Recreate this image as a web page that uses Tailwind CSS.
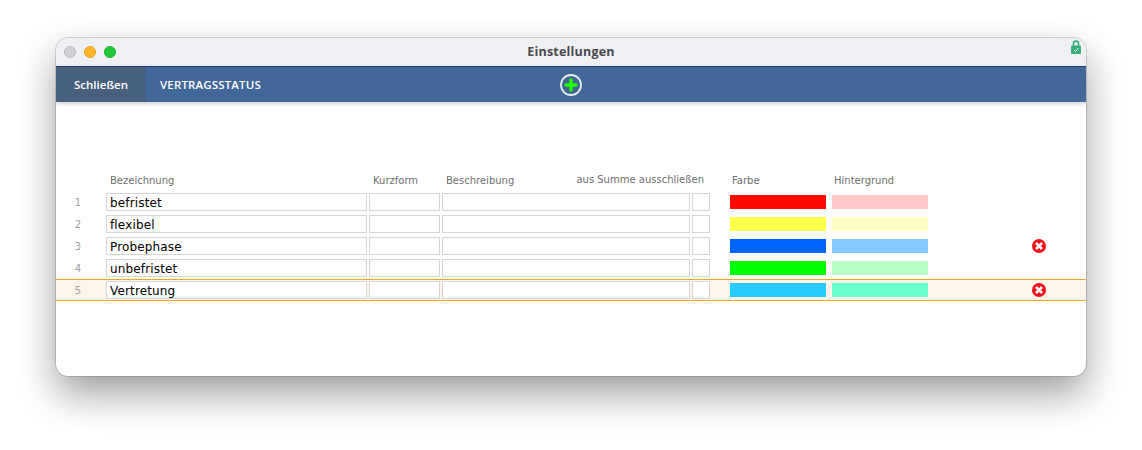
<!DOCTYPE html>
<html lang="de">
<head>
  <meta charset="UTF-8" />
  <title>Einstellungen</title>
  <script src="https://cdn.jsdelivr.net/npm/@tailwindcss/browser@4"></script>
</head>
<body class="bg-white w-[1142px] h-[450px] overflow-hidden font-['DejaVu_Sans',sans-serif]">
  <div class="ml-[56px] mt-[38px] w-[1030px] h-[338px] rounded-[12px] bg-white overflow-hidden outline outline-1 outline-black/15 shadow-[0_18px_38px_rgba(0,0,0,0.38)]">

    <!-- title bar -->
    <div class="h-[28px] bg-[#eff0f4] grid grid-cols-[1fr_auto_1fr] items-center px-[8px]">
      <div class="flex gap-[8px]">
        <span class="w-[12px] h-[12px] rounded-full bg-[#d1d1d6] border border-[#bbbbc0]"></span>
        <span class="w-[12px] h-[12px] rounded-full bg-[#fdb52b] border border-[#e8a320]"></span>
        <span class="w-[12px] h-[12px] rounded-full bg-[#1fc638] border border-[#1bb02f]"></span>
      </div>
      <div class="font-['Open_Sans',sans-serif] font-bold text-[12.5px] tracking-[0.2px] text-[#4a4a4e]">Einstellungen</div>
      <div class="flex justify-end -mr-[3px]">
        <svg class="w-[10px] h-[14px] -mt-[11px]" viewBox="0 0 10 14">
          <path d="M2.5 6V3.6a2.5 2.5 0 0 1 5 0V6" fill="none" stroke="#35b07a" stroke-width="1.6" />
          <rect x="0" y="5.5" width="10" height="8.5" rx="1" fill="#35b07a" />
          <path d="M3 10l1.6 1.6L7.2 8.2" fill="none" stroke="#fff" stroke-width="1" />
        </svg>
      </div>
    </div>

    <!-- nav -->
    <div class="relative z-10 h-[36px] border-t border-t-[#1d3a68] bg-[#426899] grid grid-cols-[1fr_auto_1fr] items-center shadow-[0_2px_4px_rgba(0,0,0,0.18)] font-['Open_Sans',sans-serif] text-[11.5px] font-semibold text-white">
      <div class="flex items-center h-full">
        <div class="w-[90px] h-full bg-[#48607f] flex items-center pl-[18px]">Schließen</div>
        <div class="pl-[14px] tracking-[0.15px] whitespace-nowrap">VERTRAGSSTATUS</div>
      </div>
      <svg class="w-[22px] h-[22px]" viewBox="0 0 22 22">
        <circle cx="11" cy="11" r="10" fill="#3f6490" stroke="#e6edf2" stroke-width="1.8" />
        <path d="M11 6v10M6 11h10" stroke="#22ff00" stroke-width="3.4" stroke-linecap="round" />
      </svg>
      <div></div>
    </div>

    <!-- table -->
    <div class="pt-[70px]">
      <div class="flex h-[19px] text-[10px] text-[#6f6f6f] leading-[17px]">
        <div class="w-[50px]"></div>
        <div class="w-[263px] pl-[4px]">Bezeichnung</div>
        <div class="w-[73px] pl-[4px]">Kurzform</div>
        <div class="w-[268px] pl-[4px] pr-[6px] flex justify-between">
          <span>Beschreibung</span>
          <span class="-mt-[1px]">aus Summe ausschließen</span>
        </div>
        <div class="w-[20px]"></div>
        <div class="w-[102px] pl-[2px]">Farbe</div>
        <div class="w-[96px] pl-[2px]">Hintergrund</div>
      </div>

      <div class="flex items-center h-[22px]">
        <div class="w-[44px] text-center text-[10px] text-[#a0a0a0]">1</div><div class="w-[6px]"></div>
        <div class="w-[261px] h-[18px] border border-[#d6d6d6] bg-white pl-[3px] text-[12px] tracking-[0.15px] leading-[18px] text-black">befristet</div>
        <div class="ml-[2px] w-[71px] h-[18px] border border-[#d6d6d6] bg-white"></div>
        <div class="ml-[2px] w-[248px] h-[18px] border border-[#d6d6d6] bg-white"></div>
        <div class="ml-[2px] w-[18px] h-[18px] border border-[#d6d6d6] bg-white"></div>
        <div class="ml-[20px] w-[96px] h-[14px] bg-[#ff0a00]"></div>
        <div class="ml-[6px] w-[96px] h-[14px] bg-[#ffc9c9]"></div>
      </div>
      <div class="flex items-center h-[22px]">
        <div class="w-[44px] text-center text-[10px] text-[#a0a0a0]">2</div><div class="w-[6px]"></div>
        <div class="w-[261px] h-[18px] border border-[#d6d6d6] bg-white pl-[3px] text-[12px] tracking-[0.15px] leading-[18px] text-black">flexibel</div>
        <div class="ml-[2px] w-[71px] h-[18px] border border-[#d6d6d6] bg-white"></div>
        <div class="ml-[2px] w-[248px] h-[18px] border border-[#d6d6d6] bg-white"></div>
        <div class="ml-[2px] w-[18px] h-[18px] border border-[#d6d6d6] bg-white"></div>
        <div class="ml-[20px] w-[96px] h-[14px] bg-[#ffff4d]"></div>
        <div class="ml-[6px] w-[96px] h-[14px] bg-[#ffffc8]"></div>
      </div>
      <div class="flex items-center h-[22px]">
        <div class="w-[44px] text-center text-[10px] text-[#a0a0a0]">3</div><div class="w-[6px]"></div>
        <div class="w-[261px] h-[18px] border border-[#d6d6d6] bg-white pl-[3px] text-[12px] tracking-[0.15px] leading-[18px] text-black">Probephase</div>
        <div class="ml-[2px] w-[71px] h-[18px] border border-[#d6d6d6] bg-white"></div>
        <div class="ml-[2px] w-[248px] h-[18px] border border-[#d6d6d6] bg-white"></div>
        <div class="ml-[2px] w-[18px] h-[18px] border border-[#d6d6d6] bg-white"></div>
        <div class="ml-[20px] w-[96px] h-[14px] bg-[#0064ff]"></div>
        <div class="ml-[6px] w-[96px] h-[14px] bg-[#85caff]"></div>
        <svg class="ml-[104px] w-[14px] h-[14px]" viewBox="0 0 14 14">
          <circle cx="7" cy="7" r="7" fill="#f5101c" />
          <path d="M4 4l6 6M10 4l-6 6" stroke="#fff" stroke-width="2.5" />
        </svg>
      </div>
      <div class="flex items-center h-[22px]">
        <div class="w-[44px] text-center text-[10px] text-[#a0a0a0]">4</div><div class="w-[6px]"></div>
        <div class="w-[261px] h-[18px] border border-[#d6d6d6] bg-white pl-[3px] text-[12px] tracking-[0.15px] leading-[18px] text-black">unbefristet</div>
        <div class="ml-[2px] w-[71px] h-[18px] border border-[#d6d6d6] bg-white"></div>
        <div class="ml-[2px] w-[248px] h-[18px] border border-[#d6d6d6] bg-white"></div>
        <div class="ml-[2px] w-[18px] h-[18px] border border-[#d6d6d6] bg-white"></div>
        <div class="ml-[20px] w-[96px] h-[14px] bg-[#00ff00]"></div>
        <div class="ml-[6px] w-[96px] h-[14px] bg-[#b9ffc8]"></div>
      </div>
      <div class="flex items-center h-[22px] bg-[#fdf5e9] border-y border-[#f5a623] box-border">
        <div class="w-[44px] text-center text-[10px] text-[#a0a0a0]">5</div><div class="w-[6px]"></div>
        <div class="w-[261px] h-[18px] border border-[#d6d6d6] bg-white pl-[3px] text-[12px] tracking-[0.15px] leading-[18px] text-black">Vertretung</div>
        <div class="ml-[2px] w-[71px] h-[18px] border border-[#d6d6d6] bg-white"></div>
        <div class="ml-[2px] w-[248px] h-[18px] border border-[#d6d6d6] bg-white"></div>
        <div class="ml-[2px] w-[18px] h-[18px] border border-[#d6d6d6] bg-white"></div>
        <div class="ml-[20px] w-[96px] h-[14px] bg-[#26ccff]"></div>
        <div class="ml-[6px] w-[96px] h-[14px] bg-[#6affcc]"></div>
        <svg class="ml-[104px] w-[14px] h-[14px]" viewBox="0 0 14 14">
          <circle cx="7" cy="7" r="7" fill="#f5101c" />
          <path d="M4 4l6 6M10 4l-6 6" stroke="#fff" stroke-width="2.5" />
        </svg>
      </div>
    </div>
  </div>
</body>
</html>
